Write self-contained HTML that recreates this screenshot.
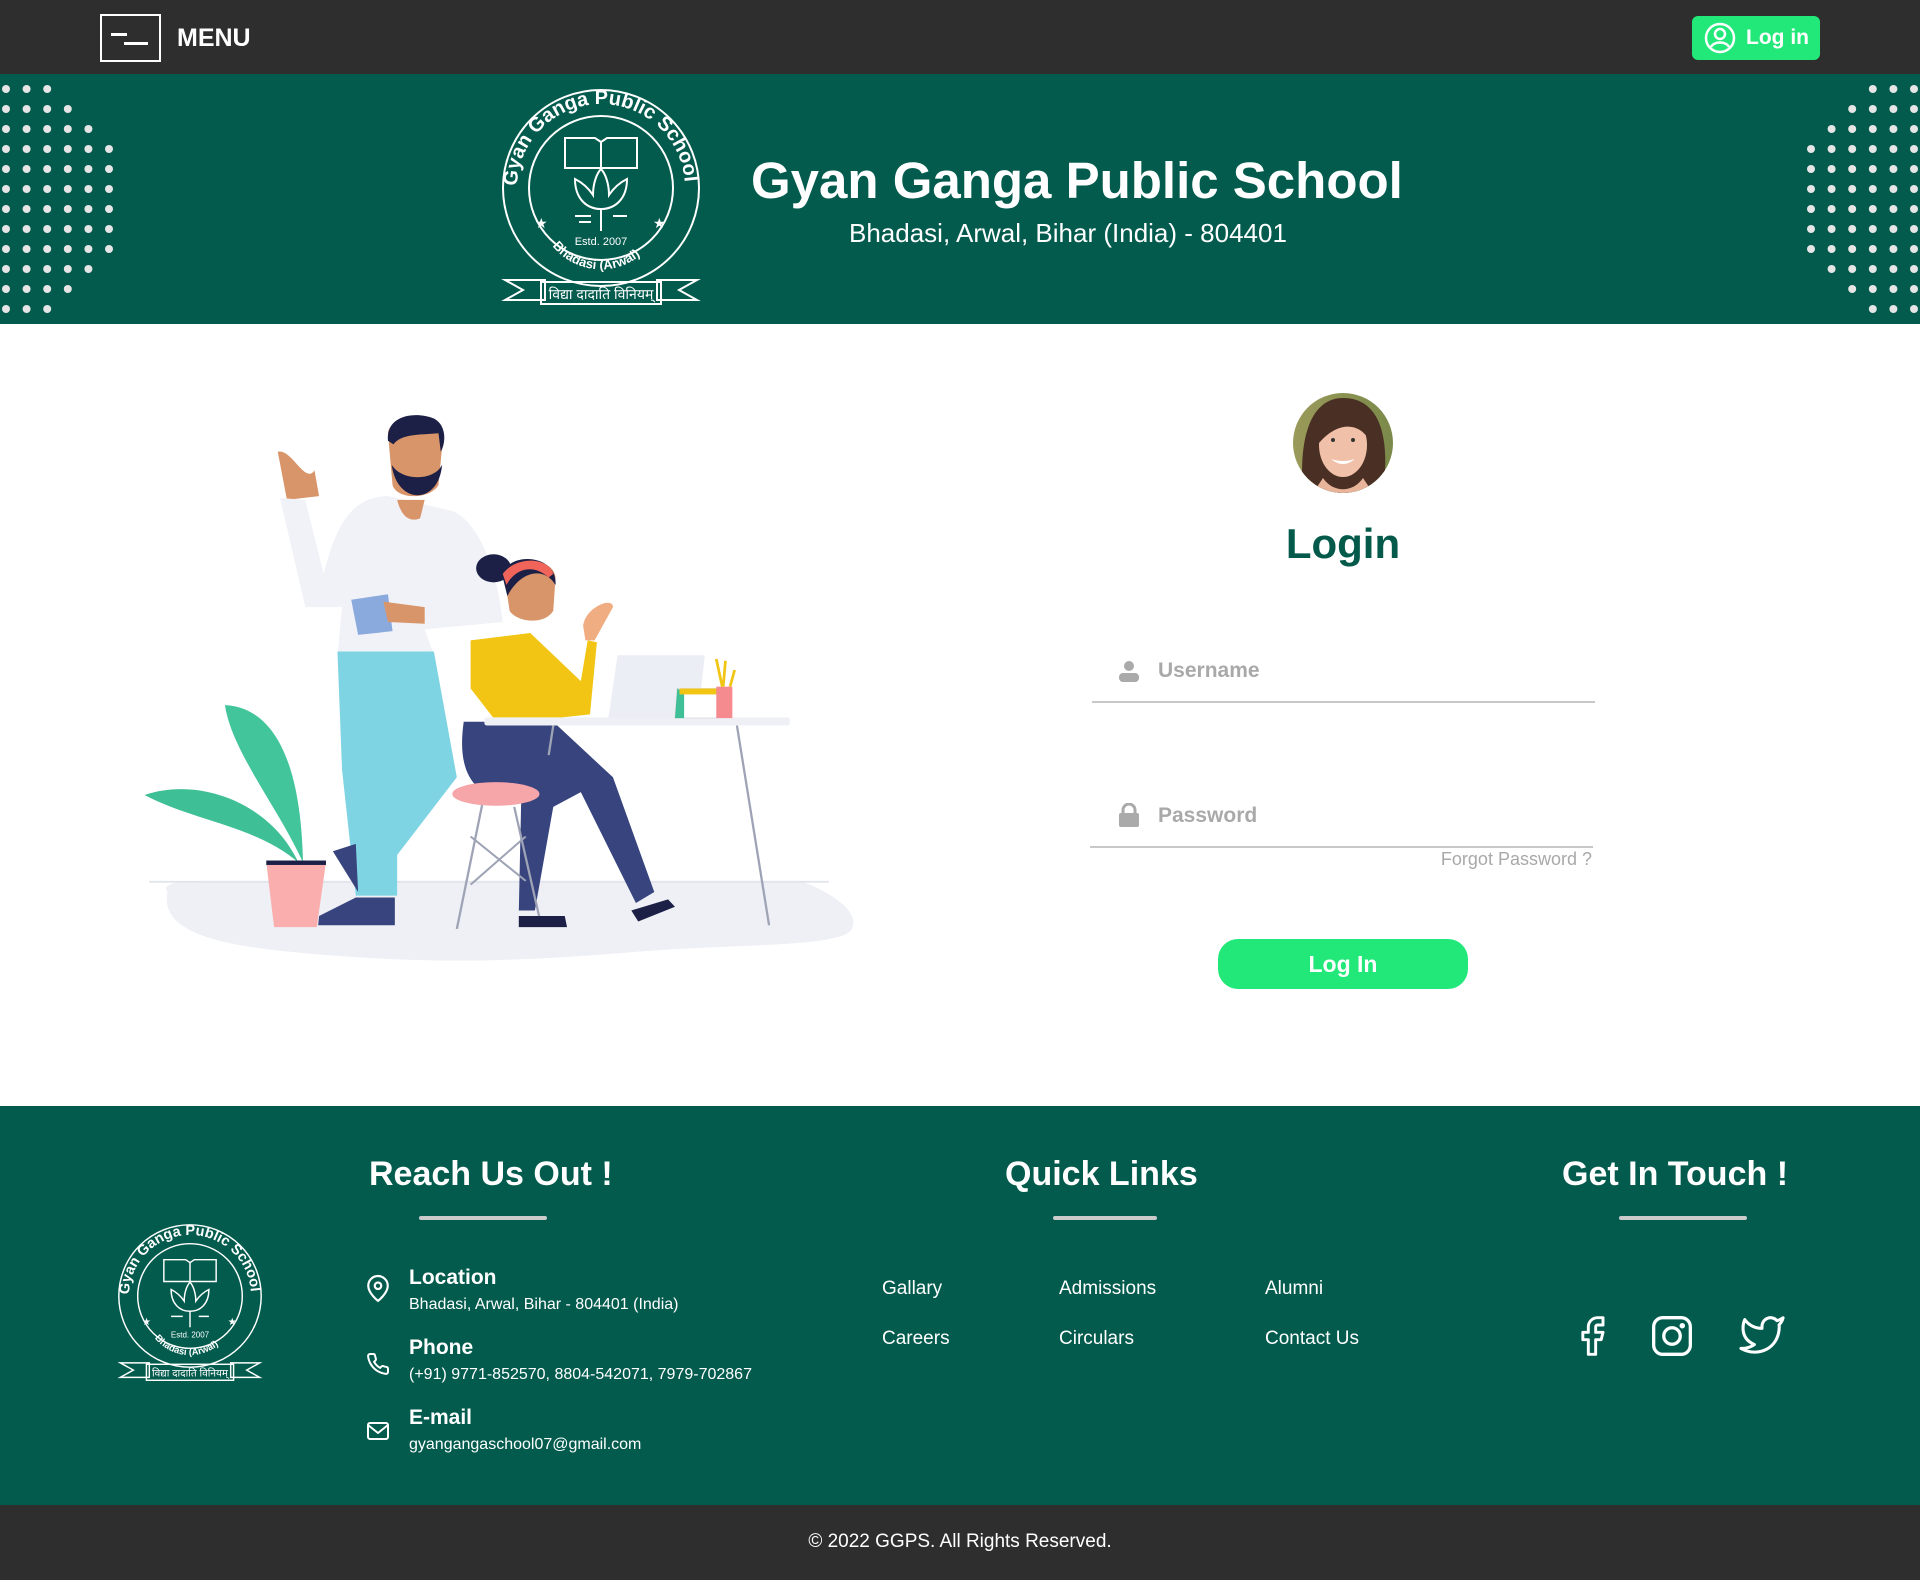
<!DOCTYPE html>
<html><head><meta charset="utf-8">
<style>
*{margin:0;padding:0;box-sizing:border-box}
body{width:1920px;height:1580px;position:relative;background:#fff;font-family:"Liberation Sans",sans-serif;overflow:hidden}
.a{position:absolute}
.top{left:0;top:0;width:1920px;height:74px;background:#2e2e2e}
.hdr{left:0;top:74px;width:1920px;height:250px;background:#025b4d}
.ft{left:0;top:1106px;width:1920px;height:400px;background:#025b4d}
.bb{left:0;top:1505px;width:1920px;height:75px;background:#2e2e2e}
.w{color:#fff}
.h2{font-size:34px;font-weight:bold;color:#fff;white-space:nowrap}
.ul{height:4px;background:#c9cccb;border-radius:2px}
.ql{font-size:19px;color:#fff}
.ct{font-size:21px;font-weight:bold;color:#fff}
.cd{font-size:16px;color:#fff;white-space:nowrap}
</style></head><body>
<div class="a top"></div>
<div class="a" style="left:100px;top:14px;width:61px;height:48px;border:2px solid #fff"></div>
<div class="a" style="left:111px;top:33px;width:16px;height:3px;background:#fff"></div>
<div class="a" style="left:124px;top:42px;width:24px;height:3px;background:#fff"></div>
<div class="a w" style="left:177px;top:24px;font-size:25px;font-weight:bold">MENU</div>
<div class="a" style="left:1692px;top:16px;width:128px;height:44px;background:#22e879;border-radius:6px"></div>
<svg class="a" style="left:1704px;top:22px" width="32" height="32" viewBox="0 0 32 32"><circle cx="16" cy="16" r="14" fill="none" stroke="#fff" stroke-width="2.5"/><circle cx="16" cy="12" r="5" fill="none" stroke="#fff" stroke-width="2.5"/><path d="M7 25c3-6 15-6 18 0" fill="none" stroke="#fff" stroke-width="2.5"/></svg>
<div class="a w" style="left:1746px;top:26px;font-size:21px;font-weight:bold">Log in</div>

<div class="a hdr"></div>
<svg class="a" style="left:0;top:74px" width="1920" height="250">
<g fill="#e6e6e6" id="dots"></g>
</svg>
<script>
(function(){var g=document.getElementById('dots'),n=[3,4,5,6,6,6,6,6,6,5,4,3],s='';
for(var r=0;r<12;r++){var y=15+r*20;for(var i=0;i<n[r];i++){s+='<circle cx="'+(6+i*20.6)+'" cy="'+y+'" r="4"/>';s+='<circle cx="'+(1914-i*20.6)+'" cy="'+y+'" r="4"/>';}}
g.innerHTML=s;})();
</script>

<svg class="a" style="left:495px;top:84px" width="212" height="230" viewBox="0 0 212 230">
<defs><path id="tp" d="M22 104 A84 84 0 0 1 190 104"/><path id="bp" d="M50 150 A62 62 0 0 0 162 150"/></defs>
<g fill="none" stroke="#fff" stroke-width="2">
<circle cx="106" cy="104" r="98"/><circle cx="106" cy="104" r="72"/>
<path d="M70 54h30l6 4 6-4h30v30h-72z"/><path d="M106 58v26"/>
<path d="M80 95c0 20 12 30 26 30s26-10 26-30c-8 4-14 10-18 16 0-12-4-22-8-26-4 4-8 14-8 26-4-6-10-12-18-16z"/>
<path d="M106 125v22"/><path d="M80 132h16M118 132h14M84 138h12"/>
<path d="M10 196l18 10-18 10h40v-20zM202 196l-18 10 18 10h-40v-20z"/>
<rect x="46" y="198" width="120" height="22"/>
</g>
<text font-family="Liberation Sans" font-size="20" font-weight="bold" fill="#fff"><textPath href="#tp" startOffset="2">Gyan Ganga Public School</textPath></text>
<text font-family="Liberation Sans" font-size="13" font-weight="bold" fill="#fff"><textPath href="#bp" startOffset="14">Bhadasi (Arwal)</textPath></text>
<text x="106" y="161" font-family="Liberation Sans" font-size="11" fill="#fff" text-anchor="middle">Estd. 2007</text>
<text x="40" y="144" font-size="14" fill="#fff">★</text><text x="158" y="144" font-size="14" fill="#fff">★</text>
<text x="106" y="215" font-size="14" fill="#fff" text-anchor="middle">विद्या दादाति विनियम्</text>
</svg>
<div class="a w" style="left:751px;top:151px;font-size:51px;font-weight:bold;white-space:nowrap">Gyan Ganga Public School</div>
<div class="a w" style="left:849px;top:218px;font-size:26px;white-space:nowrap">Bhadasi, Arwal, Bihar (India) - 804401</div>

<svg class="a" style="left:140px;top:400px" width="720" height="580" viewBox="0 0 1568 1568" preserveAspectRatio="none">
<path d="M60 1330 C40 1300 120 1300 140 1300 L1440 1300 C1500 1330 1570 1380 1550 1430 C1530 1480 1300 1470 1100 1490 C900 1510 700 1530 400 1500 C200 1480 40 1450 60 1330z" fill="#eef0f6"/>
<rect x="20" y="1300" width="1480" height="5" fill="#e2e4ec"/>
<path d="M185 825 C280 830 350 950 355 1250 C300 1100 200 950 185 825z" fill="#43c59b"/>
<path d="M10 1068 C120 1020 280 1080 345 1250 C250 1150 120 1140 10 1068z" fill="#3fbf96"/>
<path d="M275 1250 H405 L385 1425 H292z" fill="#fbaeae"/>
<rect x="275" y="1245" width="130" height="12" fill="#1c2046"/>
<path d="M300 140 C330 130 360 230 380 190 L390 260 L320 270z" fill="#d9956a"/>
<path d="M305 265 L360 270 L400 470 C430 320 470 260 540 260 L680 300 C740 330 780 470 790 600 L620 620 L640 690 H430 L440 560 L360 560z" fill="#f1f2f7"/>
<path d="M540 90 C540 40 660 40 660 100 L650 230 C630 270 560 270 550 230z" fill="#d9956a"/>
<path d="M548 175 C560 285 650 285 658 175 C640 220 570 220 548 175z" fill="#1c2046"/>
<path d="M540 110 C535 40 600 30 640 50 C670 70 665 120 655 140 L650 90 C610 95 570 90 552 120z" fill="#1c2046"/>
<path d="M560 270 L620 270 L610 320 C590 330 570 320 560 270z" fill="#d9956a"/>
<path d="M460 540 L540 525 L550 625 L475 635z" fill="#8aaadd"/>
<path d="M530 545 L620 560 L620 605 L540 600z" fill="#d9956a"/>
<path d="M430 680 H640 L690 1020 L560 1230 L560 1340 H470 L440 1000z" fill="#7fd4e3"/>
<path d="M420 1220 L470 1200 L475 1330 z" fill="#37447e"/>
<path d="M390 1395 L470 1345 L555 1345 L555 1420 H388z" fill="#37447e"/>
<circle cx="770" cy="455" r="38" fill="#1c2046"/>
<path d="M795 490 C800 420 900 420 905 480 L900 570 C880 610 820 600 805 570z" fill="#d9956a"/>
<path d="M790 480 C790 410 910 410 905 500 C880 450 830 460 800 530z" fill="#1c2046"/>
<path d="M790 470 C820 420 890 425 900 470 L890 480 C860 445 820 450 798 500z" fill="#f0645a"/>
<path d="M720 650 L850 630 L960 760 L975 650 L995 655 L980 850 L905 860 H770 L720 780z" fill="#f2c514"/>
<path d="M965 610 C970 560 1030 530 1030 560 L990 650 L970 650z" fill="#f1ad82"/>
<path d="M705 870 H900 L1030 1020 L1120 1330 L1080 1360 L960 1060 L900 1100 L860 1380 H825 L830 1090 C720 1080 690 1000 705 870z" fill="#37447e"/>
<ellipse cx="775" cy="1065" rx="95" ry="32" fill="#f6a5a8"/>
<g stroke="#9ea3b5" stroke-width="5" fill="none"><path d="M745 1095 L690 1430M815 1100 L870 1400M720 1180 L840 1300M840 1180 L720 1310"/><path d="M1300 880 L1370 1420M900 880 L890 960"/></g>
<path d="M825 1395 H925 L930 1425 H825z" fill="#1c2046"/>
<path d="M1070 1380 L1150 1350 L1165 1370 L1085 1410z" fill="#1c2046"/>
<rect x="750" y="858" width="665" height="22" rx="6" fill="#eef0f6"/>
<path d="M1040 690 H1230 L1215 860 H1020z" fill="#eceef6"/>
<path d="M1170 780 H1258 V860 H1165z" fill="#fff" stroke="#e0e0e6" stroke-width="3"/>
<path d="M1170 780 L1165 860 H1185 V790z" fill="#3fbf96"/>
<rect x="1175" y="780" width="82" height="16" fill="#f2c514"/>
<rect x="1255" y="775" width="35" height="85" fill="#f58a8f"/>
<path d="M1255 700 L1268 775M1275 705 L1270 775M1295 730 L1285 775" stroke="#f2c514" stroke-width="6"/>
</svg>

<svg class="a" style="left:1293px;top:393px" width="100" height="100" viewBox="0 0 100 100">
<defs><clipPath id="cc"><circle cx="50" cy="50" r="50"/></clipPath><linearGradient id="bg" x1="0" x2="1"><stop offset="0" stop-color="#9a9a5a"/><stop offset="1" stop-color="#7a8a4a"/></linearGradient></defs>
<g clip-path="url(#cc)"><rect width="100" height="100" fill="url(#bg)"/>
<path d="M10 100 C5 40 20 5 50 5 C85 5 98 40 90 100z" fill="#4a3024"/>
<ellipse cx="50" cy="52" rx="24" ry="32" fill="#f0c0a8"/>
<path d="M26 50 C26 20 40 12 55 14 C70 16 76 30 75 45 C65 30 45 28 26 50z" fill="#4a3024"/>
<path d="M38 66 Q50 76 62 66 Q50 70 38 66z" fill="#fff"/>
<circle cx="40" cy="47" r="2" fill="#333"/><circle cx="60" cy="47" r="2" fill="#333"/>
<path d="M30 85 C40 100 60 100 70 85 L80 100 H20z" fill="#e8b49a"/></g>
</svg>
<div class="a" style="left:1243px;top:520px;width:200px;text-align:center;font-size:42px;font-weight:bold;color:#03594a">Login</div>

<svg class="a" style="left:1118px;top:660px" width="22" height="22" viewBox="0 0 22 22"><circle cx="11" cy="6" r="5" fill="#aaa"/><rect x="1" y="13" width="20" height="9" rx="4" fill="#aaa"/></svg>
<div class="a" style="left:1158px;top:659px;font-size:21px;color:#a9a9a9;font-weight:bold">Username</div>
<div class="a" style="left:1092px;top:701px;width:503px;height:2px;background:#c8c8c8"></div>
<svg class="a" style="left:1118px;top:803px" width="22" height="24" viewBox="0 0 22 24"><path d="M5 11V7a6 6 0 0 1 12 0v4" fill="none" stroke="#aaa" stroke-width="3"/><rect x="1" y="10" width="20" height="14" rx="2" fill="#aaa"/></svg>
<div class="a" style="left:1158px;top:804px;font-size:21px;color:#a9a9a9;font-weight:bold">Password</div>
<div class="a" style="left:1090px;top:846px;width:503px;height:2px;background:#c8c8c8"></div>
<div class="a" style="left:1380px;top:849px;width:212px;text-align:right;font-size:18px;color:#a9a9a9">Forgot Password ?</div>
<div class="a" style="left:1218px;top:939px;width:250px;height:50px;background:#22e879;border-radius:20px;color:#fff;font-size:23px;font-weight:bold;text-align:center;line-height:50px">Log In</div>

<div class="a ft"></div>
<svg class="a" style="left:113px;top:1218px" width="154" height="172" viewBox="0 0 212 230">
<defs><path id="tp2" d="M22 104 A84 84 0 0 1 190 104"/><path id="bp2" d="M50 150 A62 62 0 0 0 162 150"/></defs>
<g fill="none" stroke="#fff" stroke-width="2">
<circle cx="106" cy="104" r="98"/><circle cx="106" cy="104" r="72"/>
<path d="M70 54h30l6 4 6-4h30v30h-72z"/><path d="M106 58v26"/>
<path d="M80 95c0 20 12 30 26 30s26-10 26-30c-8 4-14 10-18 16 0-12-4-22-8-26-4 4-8 14-8 26-4-6-10-12-18-16z"/>
<path d="M106 125v22"/><path d="M80 132h16M118 132h14"/>
<path d="M10 196l18 10-18 10h40v-20zM202 196l-18 10 18 10h-40v-20z"/>
<rect x="46" y="198" width="120" height="22"/>
</g>
<text font-family="Liberation Sans" font-size="20" font-weight="bold" fill="#fff"><textPath href="#tp2" startOffset="2">Gyan Ganga Public School</textPath></text>
<text font-family="Liberation Sans" font-size="13" font-weight="bold" fill="#fff"><textPath href="#bp2" startOffset="14">Bhadasi (Arwal)</textPath></text>
<text x="106" y="161" font-family="Liberation Sans" font-size="11" fill="#fff" text-anchor="middle">Estd. 2007</text>
<text x="40" y="144" font-size="14" fill="#fff">★</text><text x="158" y="144" font-size="14" fill="#fff">★</text>
<text x="106" y="215" font-size="14" fill="#fff" text-anchor="middle">विद्या दादाति विनियम्</text>
</svg>

<div class="a h2" style="left:369px;top:1155px">Reach Us Out !</div>
<div class="a ul" style="left:419px;top:1216px;width:128px"></div>
<div class="a h2" style="left:1005px;top:1155px">Quick Links</div>
<div class="a ul" style="left:1053px;top:1216px;width:104px"></div>
<div class="a h2" style="left:1562px;top:1155px">Get In Touch !</div>
<div class="a ul" style="left:1619px;top:1216px;width:128px"></div>

<svg class="a" style="left:365px;top:1274px" width="26" height="30" viewBox="0 0 24 26" fill="none" stroke="#fff" stroke-width="2"><path d="M21 10c0 7-9 14-9 14s-9-7-9-14a9 9 0 0 1 18 0z"/><circle cx="12" cy="10" r="3"/></svg>
<div class="a ct" style="left:409px;top:1266px">Location</div>
<div class="a cd" style="left:409px;top:1296px">Bhadasi, Arwal, Bihar - 804401 (India)</div>
<svg class="a" style="left:366px;top:1352px" width="24" height="24" viewBox="0 0 24 24" fill="none" stroke="#fff" stroke-width="2"><path d="M22 16.9v3a2 2 0 0 1-2.2 2 19.8 19.8 0 0 1-8.6-3.1 19.5 19.5 0 0 1-6-6A19.8 19.8 0 0 1 2.1 4.2 2 2 0 0 1 4.1 2h3a2 2 0 0 1 2 1.7c.1 1 .4 1.9.7 2.8a2 2 0 0 1-.5 2.1L8.1 9.9a16 16 0 0 0 6 6l1.3-1.3a2 2 0 0 1 2.1-.4c.9.3 1.8.6 2.8.7a2 2 0 0 1 1.7 2z"/></svg>
<div class="a ct" style="left:409px;top:1336px">Phone</div>
<div class="a cd" style="left:409px;top:1366px">(+91) 9771-852570, 8804-542071, 7979-702867</div>
<svg class="a" style="left:366px;top:1420px" width="24" height="22" viewBox="0 0 24 22" fill="none" stroke="#fff" stroke-width="2"><rect x="2" y="3" width="20" height="16" rx="2"/><path d="M2 5l10 8 10-8"/></svg>
<div class="a ct" style="left:409px;top:1406px">E-mail</div>
<div class="a cd" style="left:409px;top:1436px">gyangangaschool07@gmail.com</div>

<div class="a ql" style="left:882px;top:1278px">Gallary</div>
<div class="a ql" style="left:1059px;top:1278px">Admissions</div>
<div class="a ql" style="left:1265px;top:1278px">Alumni</div>
<div class="a ql" style="left:882px;top:1328px">Careers</div>
<div class="a ql" style="left:1059px;top:1328px">Circulars</div>
<div class="a ql" style="left:1265px;top:1328px">Contact Us</div>

<svg class="a" style="left:1570px;top:1314px" width="44" height="44" viewBox="0 0 24 24" fill="none" stroke="#fff" stroke-width="1.6" stroke-linejoin="round"><path d="M18 2h-3a5 5 0 0 0-5 5v3H7v4h3v8h4v-8h3l1-4h-4V7a1 1 0 0 1 1-1h3z"/></svg>
<svg class="a" style="left:1650px;top:1314px" width="44" height="44" viewBox="0 0 24 24" fill="none" stroke="#fff" stroke-width="1.8"><rect x="2" y="2" width="20" height="20" rx="5"/><circle cx="12" cy="12" r="4.5"/><circle cx="17.6" cy="6.4" r="0.6" fill="#fff"/></svg>
<svg class="a" style="left:1738px;top:1312px" width="48" height="46" viewBox="0 0 24 24" fill="none" stroke="#fff" stroke-width="1.6" stroke-linejoin="round"><path d="M23 3a10.9 10.9 0 0 1-3.14 1.53 4.48 4.48 0 0 0-7.86 3v1A10.66 10.66 0 0 1 3 4s-4 9 5 13a11.640 11.64 0 0 1-7 2c9 5 20 0 20-11.5a4.5 4.5 0 0 0-.08-.83A7.72 7.72 0 0 0 23 3z"/></svg>

<div class="a bb"></div>
<div class="a w" style="left:0;top:1531px;width:1920px;text-align:center;font-size:19px">© 2022 GGPS. All Rights Reserved.</div>
</body></html>
